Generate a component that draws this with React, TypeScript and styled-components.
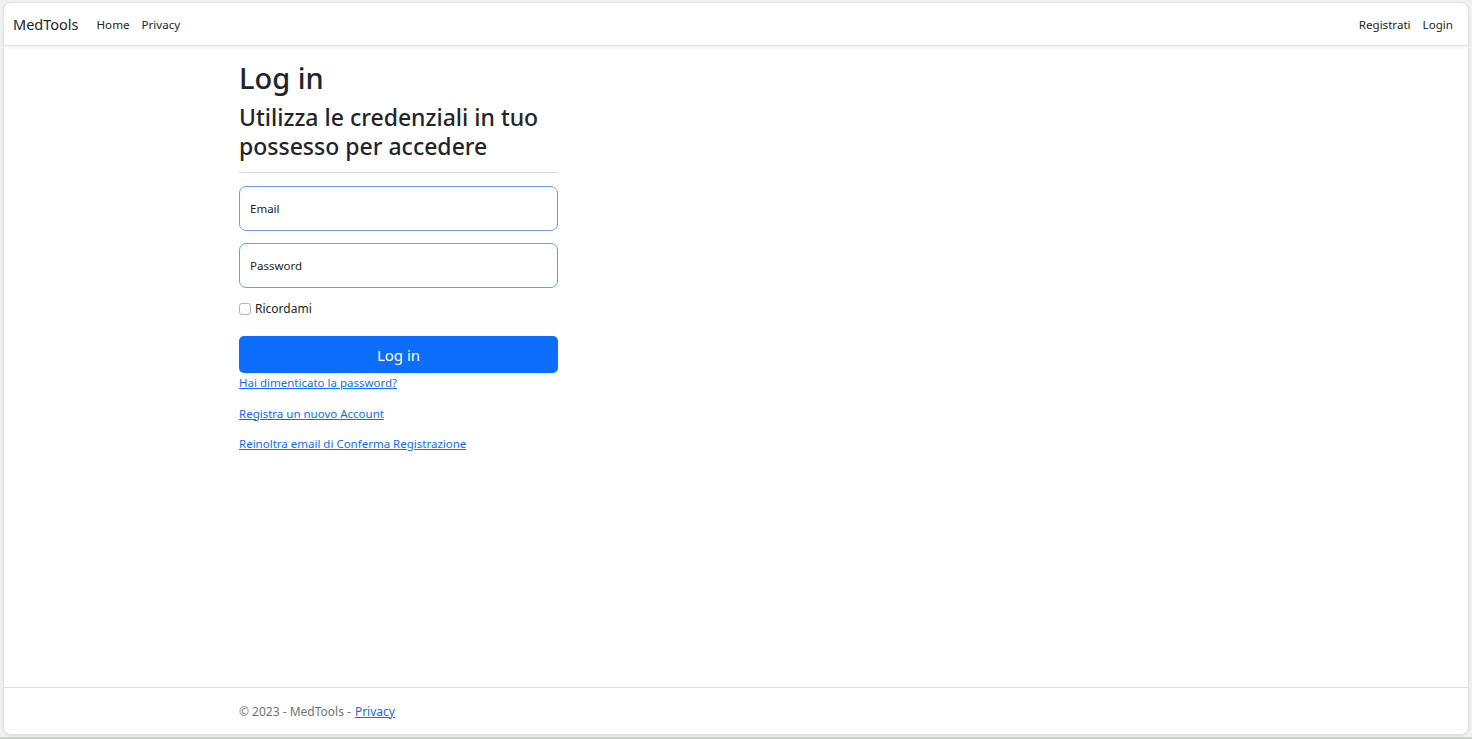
import React from "react";
import styled, { createGlobalStyle } from "styled-components";

const GlobalStyle = createGlobalStyle`
  html, body {
    margin: 0;
    padding: 0;
    background: #f0f0f0;
    font-family: "Noto Sans", "Open Sans", Arial, sans-serif;
    color: #212529;
  }
  * { box-sizing: border-box; }
`;

const Screen = styled.div`
  height: 739px;
  padding: 2px 3px 0 3px;
  display: flex;
  flex-direction: column;
  border-bottom: 2px solid #c9d6c4;
`;

const Window = styled.div`
  flex: 1;
  margin-bottom: 2px;
  background: #fff;
  border: 1px solid #e2e2e2;
  border-radius: 8px;
  display: flex;
  flex-direction: column;
  overflow: hidden;
  box-shadow: 0 1px 2px rgba(0, 0, 0, 0.08);
`;

const NavBar = styled.nav`
  height: 43px;
  flex-shrink: 0;
  display: flex;
  align-items: center;
  padding: 0 15px 0 9px;
  border-bottom: 1px solid #dee2e6;
  box-shadow: 0 2px 4px rgba(0, 0, 0, 0.05);
`;

const Brand = styled.a`
  font-size: 14.5px;
  color: #212529;
  text-decoration: none;
  margin-right: 18px;
`;

const NavList = styled.div`
  display: flex;
  gap: 12px;
  margin-left: ${(p: { $right?: boolean }) => (p.$right ? "auto" : "0")};
`;

const NavLink = styled.a`
  font-size: 11.6px;
  color: #212529;
  text-decoration: none;
`;

const Main = styled.main`
  flex: 1;
  padding: 13px 0 0 235px;
`;

const Column = styled.section`
  width: 319px;
`;

const Title = styled.h1`
  margin: 0;
  font-size: 29px;
  font-weight: 500;
  line-height: 38px;
`;

const Subtitle = styled.h2`
  margin: 6px 0 0;
  font-size: 23px;
  font-weight: 500;
  line-height: 29px;
`;

const Rule = styled.hr`
  margin: 11px 0 13px;
  border: 0;
  border-top: 1px solid #dadada;
`;

const Field = styled.div`
  height: 45px;
  border: 1px solid #6b9fe0;
  border-radius: 7px;
  display: flex;
  align-items: center;
  padding: 0 10px;
  font-size: 11.5px;
  color: #212529;
  margin-bottom: 12px;
`;

const CheckRow = styled.label`
  display: flex;
  align-items: center;
  gap: 4px;
  font-size: 12px;
  margin-top: 4px;
`;

const CheckBox = styled.span`
  width: 12px;
  height: 12px;
  border: 1px solid #b5b5b5;
  border-radius: 3px;
  background: #fff;
`;

const Button = styled.button`
  display: block;
  width: 100%;
  height: 37px;
  margin-top: 19px;
  border: 0;
  border-radius: 5px;
  background: #0d6efd;
  color: #fff;
  font-family: inherit;
  font-size: 15px;
`;

const LinkList = styled.div`
  display: flex;
  flex-direction: column;
  gap: 13px;
  margin-top: 1px;
`;

const TextLink = styled.a`
  font-size: 11.5px;
  line-height: 17.5px;
  color: #0d6efd;
  text-decoration: underline;
  align-self: flex-start;
`;

const Footer = styled.footer`
  height: 47px;
  flex-shrink: 0;
  border-top: 1px solid #dee2e6;
  display: flex;
  align-items: center;
  padding-left: 235px;
  font-size: 12px;
  color: #6c757d;
`;

const FooterLink = styled.a`
  color: #0d6efd;
  text-decoration: underline;
  margin-left: 4px;
`;

export default function App() {
  return (
    <>
      <GlobalStyle />
      <Screen>
        <Window>
          <NavBar>
            <Brand href="#">MedTools</Brand>
            <NavList>
              <NavLink href="#">Home</NavLink>
              <NavLink href="#">Privacy</NavLink>
            </NavList>
            <NavList $right>
              <NavLink href="#">Registrati</NavLink>
              <NavLink href="#">Login</NavLink>
            </NavList>
          </NavBar>
          <Main>
            <Column>
              <Title>Log in</Title>
              <Subtitle>
                Utilizza le credenziali in tuo
                <br />
                possesso per accedere
              </Subtitle>
              <Rule />
              <Field>Email</Field>
              <Field>Password</Field>
              <CheckRow>
                <CheckBox />
                Ricordami
              </CheckRow>
              <Button>Log in</Button>
              <LinkList>
                <TextLink href="#">Hai dimenticato la password?</TextLink>
                <TextLink href="#">Registra un nuovo Account</TextLink>
                <TextLink href="#">Reinoltra email di Conferma Registrazione</TextLink>
              </LinkList>
            </Column>
          </Main>
          <Footer>
            © 2023 - MedTools -<FooterLink href="#">Privacy</FooterLink>
          </Footer>
        </Window>
      </Screen>
    </>
  );
}
